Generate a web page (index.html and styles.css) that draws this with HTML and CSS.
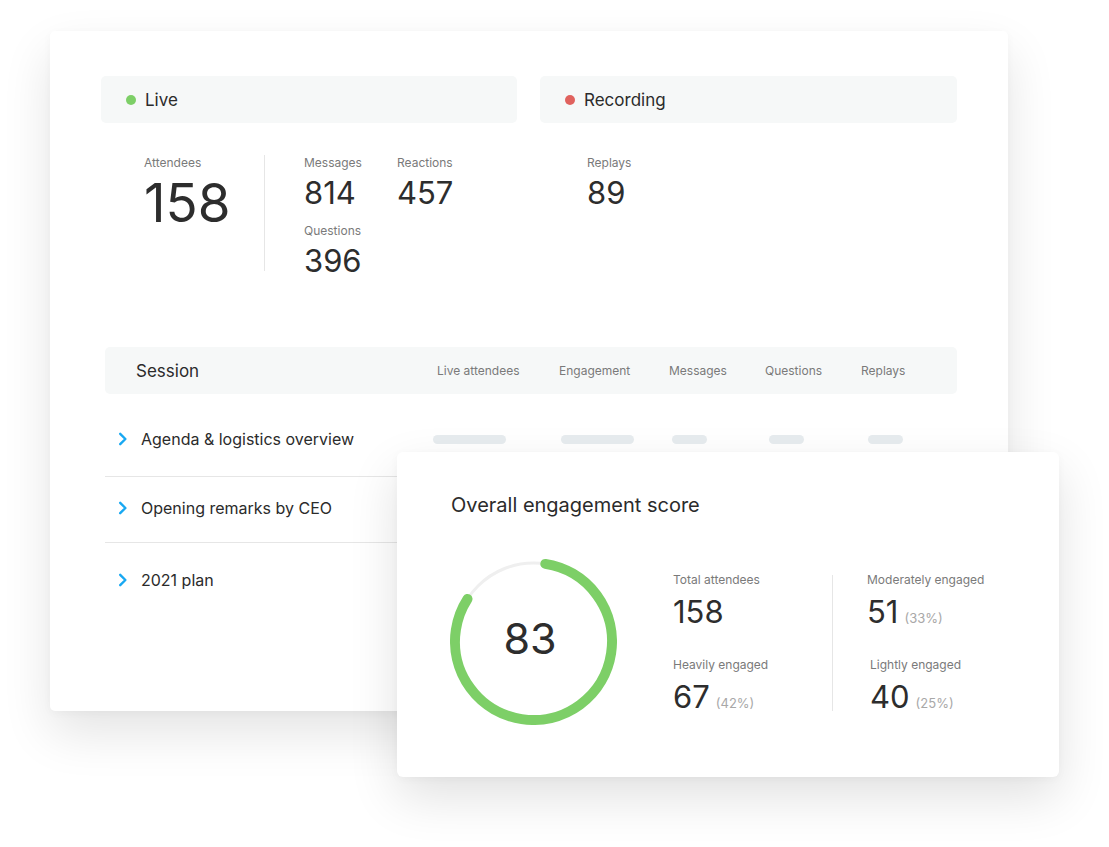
FILE: index.html
```html
<!DOCTYPE html>
<html lang="en">
<head>
<meta charset="utf-8">
<title>Session analytics</title>
<link rel="stylesheet" href="styles.css">
</head>
<body>
<div class="stage">
  <section class="card main">
    <div class="status-row">
      <div class="status"><span class="dot dot-green"></span>Live</div>
      <div class="status"><span class="dot dot-red"></span>Recording</div>
    </div>

    <div class="stats-row">
      <div class="stats-live">
        <div class="stat stat-attendees">
          <div class="label">Attendees</div>
          <div class="value value-xl">158</div>
        </div>
        <div class="vdivider"></div>
        <div class="stat-grid">
          <div class="stat">
            <div class="label">Messages</div>
            <div class="value">814</div>
          </div>
          <div class="stat">
            <div class="label">Reactions</div>
            <div class="value">457</div>
          </div>
          <div class="stat">
            <div class="label">Questions</div>
            <div class="value">396</div>
          </div>
        </div>
      </div>
      <div class="stats-rec">
        <div class="stat">
          <div class="label">Replays</div>
          <div class="value">89</div>
        </div>
      </div>
    </div>

    <div class="table">
      <div class="thead">
        <div class="th th-session">Session</div>
        <div class="th th-first">Live attendees</div>
        <div class="th">Engagement</div>
        <div class="th">Messages</div>
        <div class="th">Questions</div>
        <div class="th">Replays</div>
      </div>
      <div class="tbody">
        <div class="trow">
          <div class="session">
            <svg class="chev" width="10" height="14" viewBox="0 0 10 14"><path d="M2.2 1.8 L7.4 7 L2.2 12.2" fill="none" stroke="#18a8f2" stroke-width="2.4" stroke-linecap="round" stroke-linejoin="round"/></svg>
            <span>Agenda &amp; logistics overview</span>
          </div>
          <div class="cell c1"><span class="bar bar-long"></span></div>
          <div class="cell c2"><span class="bar bar-long"></span></div>
          <div class="cell c3"><span class="bar"></span></div>
          <div class="cell c4"><span class="bar"></span></div>
          <div class="cell c5"><span class="bar"></span></div>
        </div>
        <div class="trow">
          <div class="session">
            <svg class="chev" width="10" height="14" viewBox="0 0 10 14"><path d="M2.2 1.8 L7.4 7 L2.2 12.2" fill="none" stroke="#18a8f2" stroke-width="2.4" stroke-linecap="round" stroke-linejoin="round"/></svg>
            <span>Opening remarks by CEO</span>
          </div>
          <div class="cell c1"><span class="bar bar-long"></span></div>
          <div class="cell c2"><span class="bar bar-long"></span></div>
          <div class="cell c3"><span class="bar"></span></div>
          <div class="cell c4"><span class="bar"></span></div>
          <div class="cell c5"><span class="bar"></span></div>
        </div>
        <div class="trow">
          <div class="session">
            <svg class="chev" width="10" height="14" viewBox="0 0 10 14"><path d="M2.2 1.8 L7.4 7 L2.2 12.2" fill="none" stroke="#18a8f2" stroke-width="2.4" stroke-linecap="round" stroke-linejoin="round"/></svg>
            <span>2021 plan</span>
          </div>
          <div class="cell c1"><span class="bar bar-long"></span></div>
          <div class="cell c2"><span class="bar bar-long"></span></div>
          <div class="cell c3"><span class="bar"></span></div>
          <div class="cell c4"><span class="bar"></span></div>
          <div class="cell c5"><span class="bar"></span></div>
        </div>
      </div>
    </div>
  </section>

  <section class="card score">
    <h2 class="score-title">Overall engagement score</h2>
    <div class="score-body">
      <div class="donut">
        <svg width="167" height="167" viewBox="0 0 167 167">
          <circle cx="83.5" cy="83.5" r="78.5" fill="none" stroke="#efefef" stroke-width="3"/>
          <circle cx="83.5" cy="83.5" r="78.5" fill="none" stroke="#7dcf67" stroke-width="10" stroke-linecap="round" stroke-dasharray="402.4 493.2" transform="rotate(-81.35 83.5 83.5)"/>
        </svg>
        <div class="donut-value">83</div>
      </div>
      <div class="score-col">
        <div class="stat">
          <div class="label">Total attendees</div>
          <div class="value">158</div>
        </div>
        <div class="stat stat-next">
          <div class="label">Heavily engaged</div>
          <div class="value">67<span class="pct">(42%)</span></div>
        </div>
      </div>
      <div class="score-divider"></div>
      <div class="score-col score-col-right">
        <div class="stat">
          <div class="label">Moderately engaged</div>
          <div class="value">51<span class="pct">(33%)</span></div>
        </div>
        <div class="stat stat-next stat-shift">
          <div class="label">Lightly engaged</div>
          <div class="value">40<span class="pct">(25%)</span></div>
        </div>
      </div>
    </div>
  </section>
</div>
</body>
</html>
```

FILE: styles.css
```css
* {
  box-sizing: border-box;
}

html, body {
  margin: 0;
  padding: 0;
  background: #ffffff;
}

body {
  font-family: Inter, "Noto Sans", "Liberation Sans", sans-serif;
  color: #2d2d2d;
  width: 1109px;
  height: 847px;
  overflow: hidden;
}

.stage {
  position: relative;
  width: 1109px;
  height: 847px;
  padding: 31px 0 0 50px;
}

.card {
  background: #ffffff;
  border-radius: 5px;
  box-shadow: 0 22px 50px rgba(0, 0, 0, 0.11), 0 2px 10px rgba(0, 0, 0, 0.03);
}

.main {
  width: 958px;
  height: 680px;
  padding: 45px 51px 0 51px;
}

/* status header */
.status-row {
  display: grid;
  grid-template-columns: 416px 417px;
  column-gap: 23px;
}

.status {
  height: 47px;
  background: #f6f8f8;
  border-radius: 5px;
  display: flex;
  align-items: center;
  gap: 9px;
  padding-left: 25px;
  font-size: 17px;
  color: #2b2b2b;
}

.dot {
  width: 10px;
  height: 10px;
  border-radius: 50%;
  flex: none;
}

.dot-green { background: #7dcf67; }
.dot-red { background: #e0625e; }

/* stats */
.stats-row {
  display: grid;
  grid-template-columns: 416px 417px;
  column-gap: 23px;
  margin-top: 32px;
}

.stats-live {
  display: flex;
  align-items: flex-start;
  padding-left: 43px;
}

.stat-attendees {
  width: 120px;
}

.vdivider {
  width: 1px;
  height: 116px;
  background: #e6e6e6;
}

.stat-grid {
  margin-left: 39px;
  display: grid;
  grid-template-columns: 93px auto;
  row-gap: 15px;
}

.stats-rec {
  padding-left: 47px;
}

.label {
  font-size: 12px;
  line-height: 15px;
  color: #7a7a7a;
  white-space: nowrap;
}

.value {
  font-size: 31px;
  line-height: 30px;
  margin-top: 8px;
  color: #2d2d2d;
  white-space: nowrap;
}

.value-xl {
  font-size: 53px;
  line-height: 52px;
  margin-top: 7px;
}

/* table */
.table {
  margin-top: 71px;
  margin-left: 4px;
  width: 852px;
}

.thead,
.trow {
  display: grid;
  grid-template-columns: 330px 124px 110px 96px 96px 96px;
  align-items: center;
}

.thead {
  height: 47px;
  background: #f6f8f8;
  border-radius: 5px;
}

.th {
  font-size: 12px;
  color: #7a7a7a;
  white-space: nowrap;
}

.th-session {
  padding-left: 31px;
  font-size: 17px;
  color: #2b2b2b;
}

.th-first {
  padding-left: 2px;
}

.trow {
  border-bottom: 1px solid #e6e6e6;
}

.trow:nth-child(1) {
  height: 83px;
  padding-top: 8px;
}

.trow:nth-child(2) {
  height: 66px;
  padding-bottom: 4px;
}

.trow:nth-child(3) {
  height: 74px;
  border-bottom: none;
}

.session {
  display: flex;
  align-items: center;
  gap: 13px;
  padding-left: 13px;
  font-size: 16px;
  color: #2b2b2b;
}

.chev {
  display: block;
  flex: none;
}

.cell {
  display: flex;
  align-items: center;
}

.bar {
  display: block;
  width: 35px;
  height: 9px;
  border-radius: 5px;
  background: #e7ecef;
}

.bar-long {
  width: 73px;
}

.c1 .bar { margin-left: -2px; }
.c2 .bar { margin-left: 2px; }
.c3 .bar { margin-left: 3px; }
.c4 .bar { margin-left: 4px; }
.c5 .bar { margin-left: 7px; }

/* engagement score card */
.score {
  position: absolute;
  left: 397px;
  top: 452px;
  width: 662px;
  height: 325px;
  border-radius: 6px;
  padding: 41px 0 0 53px;
  box-shadow: 0 20px 50px rgba(0, 0, 0, 0.12), 0 2px 10px rgba(0, 0, 0, 0.03);
}

.score-title {
  margin: 0 0 0 1px;
  font-size: 20px;
  line-height: 24px;
  font-weight: 400;
  color: #2b2b2b;
}

.score-body {
  margin-top: 41px;
  display: flex;
  align-items: flex-start;
}

.donut {
  display: grid;
  width: 167px;
  height: 167px;
  flex: none;
}

.donut svg,
.donut-value {
  grid-area: 1 / 1;
}

.donut svg {
  display: block;
}

.donut-value {
  place-self: center;
  font-size: 43px;
  line-height: 43px;
  color: #2d2d2d;
  margin: 0 7px 7px 0;
}

.score-col {
  margin-left: 56px;
  width: 159px;
  padding-top: 14px;
}

.score-col-right {
  margin-left: 0;
  width: auto;
  padding-left: 34px;
}

.score-divider {
  width: 1px;
  height: 136px;
  margin-top: 17px;
  background: #e6e6e6;
}

.score .value {
  margin-top: 10px;
  display: flex;
  align-items: baseline;
  height: 30px;
}

.stat-next {
  margin-top: 30px;
}

.stat-shift {
  margin-left: 3px;
}

.pct {
  font-size: 13px;
  line-height: 1;
  color: #a8a8a8;
  margin-left: 6px;
}
```
